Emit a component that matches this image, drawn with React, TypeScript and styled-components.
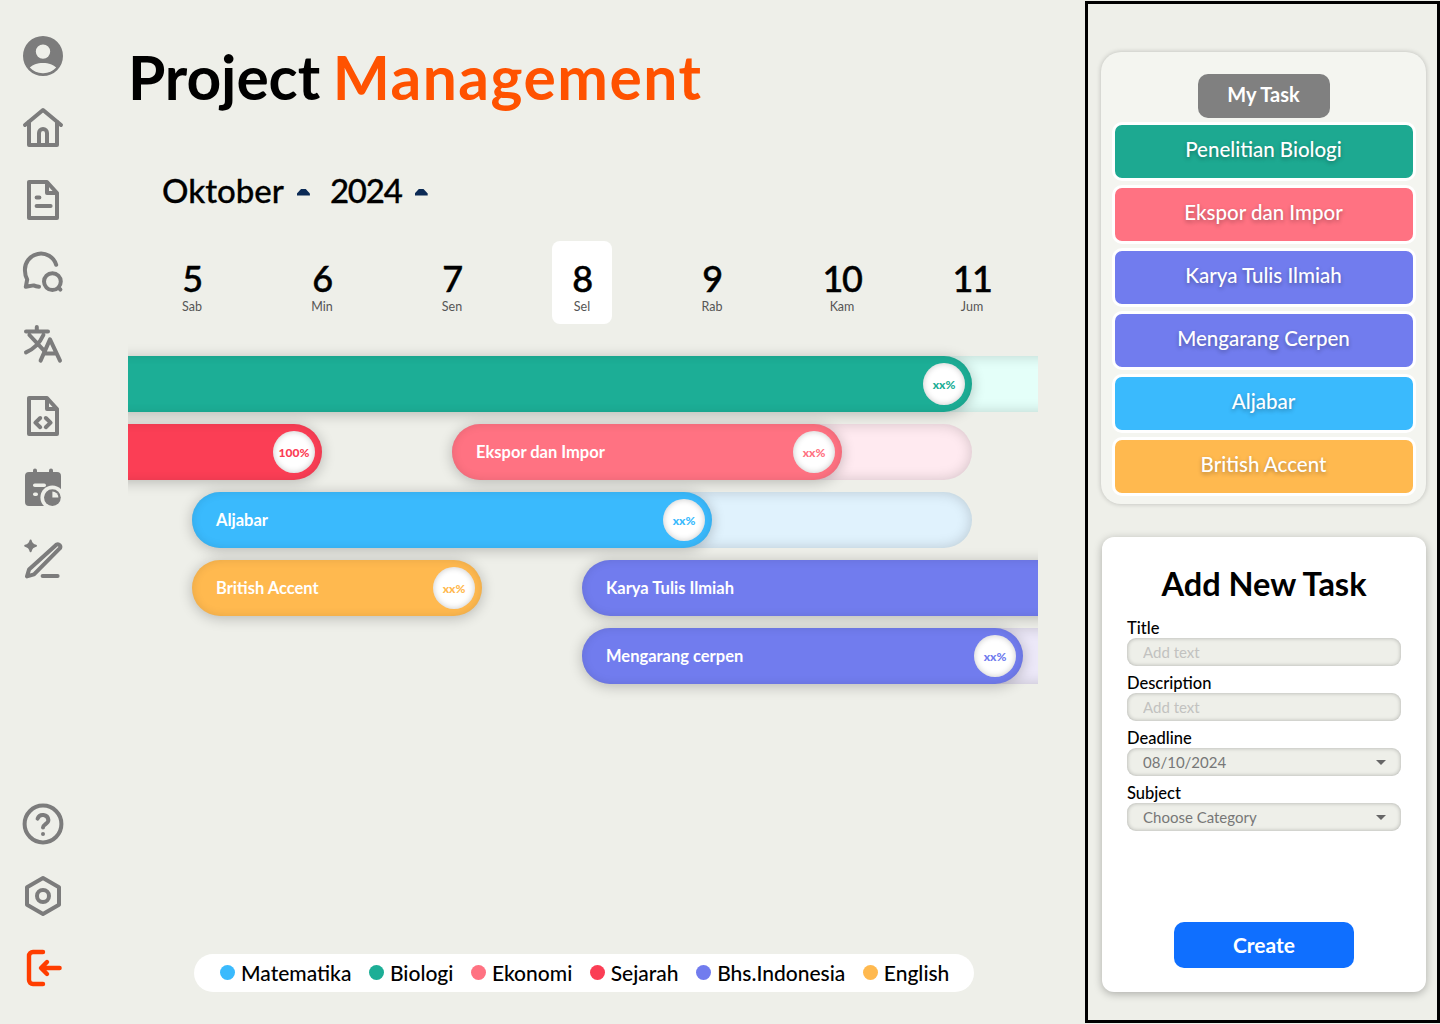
import React from 'react'
import styled, { createGlobalStyle } from 'styled-components'

const GlobalStyle = createGlobalStyle`
  html, body {
    margin: 0;
    padding: 0;
    background: #eeefe9;
  }
  * {
    box-sizing: border-box;
  }
`

const Page = styled.div`
  display: flex;
  width: 1440px;
  height: 1024px;
  overflow: hidden;
  background: #eeefe9;
  color: #000;
  font-family: Lato, 'Open Sans', sans-serif;
`

const Sidebar = styled.nav`
  flex: 0 0 86px;
  display: flex;
  flex-direction: column;
  justify-content: space-between;
  padding: 32px 0 32px 19px;
`

const IconGroup = styled.div`
  display: flex;
  flex-direction: column;
  gap: 24px;
`

const NavIcon = styled.svg.attrs({ viewBox: '0 0 24 24' })<{ $color?: string }>`
  display: block;
  width: 48px;
  height: 48px;
  fill: none;
  stroke: ${(p) => p.$color || '#7c7c7c'};
  stroke-width: 2;
  stroke-linecap: round;
  stroke-linejoin: round;
`

const Main = styled.main`
  flex: 0 0 999px;
  display: flex;
  flex-direction: column;
  padding-left: 42px;
`

const Title = styled.h1`
  margin: 41px 0 0;
  font-size: 60.5px;
  line-height: 72px;
  font-weight: 700;
  letter-spacing: -0.1px;
  word-spacing: -2px;
  span {
    color: #ff5200;
    letter-spacing: 1.5px;
  }
`

const DatePicker = styled.div`
  display: flex;
  align-items: center;
  margin: 61px 0 0 34px;
  height: 32px;
  font-size: 33px;
  font-weight: 500;
  -webkit-text-stroke: 0.3px #000;
`

const Year = styled.span`
  letter-spacing: -1.2px;
`

const Caret = styled.i<{ $gap: number }>`
  width: 13px;
  height: 7px;
  margin: 4px ${(p) => p.$gap}px 0 13px;
  background: #0b2a55;
  clip-path: polygon(50% 0, 68% 8%, 100% 72%, 100% 100%, 0 100%, 0 72%, 32% 8%);
`

const Days = styled.div`
  display: flex;
  gap: 70px;
  margin: 35px 0 0 34px;
`

const Day = styled.div<{ $active?: boolean }>`
  width: 60px;
  height: 83px;
  padding-top: 17px;
  border-radius: 8px;
  text-align: center;
  background: ${(p) => (p.$active ? '#fff' : 'transparent')};
`

const DayNumber = styled.div`
  font-size: 36px;
  line-height: 40px;
  font-weight: 500;
  letter-spacing: -1.5px;
  -webkit-text-stroke: 0.5px #000;
`

const DayName = styled.div`
  margin-top: 1px;
  font-size: 12.5px;
  line-height: 16px;
  color: #555;
`

const Chart = styled.div`
  width: 910px;
  margin-top: 32px;
  display: flex;
  flex-direction: column;
  gap: 12px;
  overflow-x: clip;
`

const Row = styled.div`
  display: flex;
  height: 56px;
`

const Track = styled.div<{ $offset: number; $width: number; $tint?: string }>`
  flex: 0 0 ${(p) => p.$width}px;
  height: 56px;
  margin-left: ${(p) => p.$offset}px;
  border-radius: 28px;
  background: ${(p) => p.$tint || 'transparent'};
  box-shadow: ${(p) => (p.$tint ? 'inset 0 0 14px rgba(0, 0, 0, 0.18)' : 'none')};
`

const Fill = styled.div<{ $width: number; $color: string }>`
  display: flex;
  align-items: center;
  justify-content: space-between;
  width: ${(p) => p.$width}px;
  height: 56px;
  padding: 0 7px 0 24px;
  border-radius: 28px;
  background: ${(p) => p.$color};
  box-shadow: 0 2px 14px rgba(0, 0, 0, 0.24), inset 0 0 10px rgba(0, 0, 0, 0.1);
  color: #fff;
  font-size: 16.5px;
  font-weight: 700;
`

const Knob = styled.div<{ $color: string }>`
  flex: none;
  display: flex;
  align-items: center;
  justify-content: center;
  width: 42px;
  height: 42px;
  border-radius: 50%;
  background: #fff;
  box-shadow: inset 0 0 6px rgba(0, 0, 0, 0.22);
  color: ${(p) => p.$color};
  font-size: 12px;
  font-weight: 900;
`

const Legend = styled.div`
  display: flex;
  align-items: center;
  gap: 17.5px;
  width: 780px;
  height: 38px;
  margin: auto 0 32px 66px;
  padding: 0 0 2px 26px;
  border-radius: 19px;
  background: #fff;
`

const LegendItem = styled.div`
  display: flex;
  align-items: center;
  gap: 6px;
  font-size: 21px;
  font-weight: 500;
`

const Dot = styled.i<{ $color: string }>`
  width: 15px;
  height: 15px;
  border-radius: 50%;
  background: ${(p) => p.$color};
`

const Aside = styled.aside`
  flex: 0 0 355px;
  display: flex;
  flex-direction: column;
  height: 1022px;
  margin-top: 1px;
  padding: 48px 11px 0 13px;
  border: 3px solid #000;
`

const TaskCard = styled.section`
  display: flex;
  flex-direction: column;
  align-items: center;
  height: 452px;
  padding-top: 22px;
  border-radius: 20px;
  background: #f4f5f0;
  box-shadow: 0 0 5px rgba(0, 0, 0, 0.22);
`

const MyTask = styled.div`
  display: flex;
  align-items: center;
  justify-content: center;
  width: 132px;
  height: 44px;
  margin-bottom: 4px;
  padding-bottom: 4px;
  border-radius: 10px;
  background: #808080;
  color: #fff;
  font-size: 20px;
  font-weight: 700;
`

const TaskList = styled.div`
  display: flex;
  flex-direction: column;
  gap: 4px;
`

const TaskItem = styled.div<{ $color: string }>`
  display: flex;
  align-items: center;
  justify-content: center;
  width: 304px;
  height: 59px;
  padding-bottom: 6px;
  border: 3px solid #fff;
  border-radius: 10px;
  background: ${(p) => p.$color};
  color: #fff;
  font-size: 20.5px;
  font-weight: 500;
  text-shadow: 0 2px 4px rgba(0, 0, 0, 0.3);
`

const FormCard = styled.form`
  display: flex;
  flex-direction: column;
  height: 455px;
  margin: 33px 0 0 1px;
  padding: 27px 25px 24px;
  border-radius: 12px;
  background: #fff;
  box-shadow: 0 2px 8px rgba(0, 0, 0, 0.28);
`

const FormTitle = styled.h2`
  margin: 0 0 14px;
  font-size: 32.5px;
  line-height: 40px;
  font-weight: 700;
  text-align: center;
`

const Label = styled.label`
  display: block;
  height: 20px;
  margin-top: 7px;
  font-size: 16.5px;
  line-height: 20px;
  font-weight: 500;
  &:first-of-type {
    margin-top: 0;
  }
`

const Input = styled.input`
  display: block;
  width: 274px;
  height: 28px;
  padding: 0 16px;
  border: none;
  outline: none;
  border-radius: 9px;
  background: #eeefe9;
  box-shadow: inset 0 0 4px rgba(0, 0, 0, 0.28);
  font-family: inherit;
  font-size: 15px;
  &::placeholder {
    color: #c2c2c0;
    opacity: 1;
  }
`

const Select = styled.div`
  display: flex;
  align-items: center;
  justify-content: space-between;
  width: 274px;
  height: 28px;
  padding: 0 15px 0 16px;
  border-radius: 9px;
  background: #eeefe9;
  box-shadow: inset 0 0 4px rgba(0, 0, 0, 0.28);
  color: #777;
  font-size: 15px;
  &::after {
    content: '';
    border-top: 5px solid #666;
    border-left: 5px solid transparent;
    border-right: 5px solid transparent;
  }
`

const CreateButton = styled.button`
  align-self: center;
  width: 180px;
  height: 46px;
  margin-top: auto;
  padding-bottom: 3px;
  border: none;
  border-radius: 10px;
  background: #0f6fff;
  color: #fff;
  font-family: inherit;
  font-size: 21px;
  font-weight: 700;
`

const TEAL = '#1cae96'
const PINK = '#ff7282'
const RED = '#fb3e55'
const BLUE = '#3abafd'
const PURPLE = '#717cee'
const ORANGE = '#ffb94f'

const days = [
  ['5', 'Sab'],
  ['6', 'Min'],
  ['7', 'Sen'],
  ['8', 'Sel'],
  ['9', 'Rab'],
  ['10', 'Kam'],
  ['11', 'Jum']
]

const legend = [
  ['Matematika', BLUE],
  ['Biologi', TEAL],
  ['Ekonomi', PINK],
  ['Sejarah', RED],
  ['Bhs.Indonesia', PURPLE],
  ['English', ORANGE]
]

const tasks = [
  ['Penelitian Biologi', '#1da991'],
  ['Ekspor dan Impor', PINK],
  ['Karya Tulis Ilmiah', PURPLE],
  ['Mengarang Cerpen', PURPLE],
  ['Aljabar', BLUE],
  ['British Accent', ORANGE]
]

const BG = '#eeefe9'

const topIcons = [
  <NavIcon key='user' style={{ stroke: 'none' }}>
    <path
      fill='#7c7c7c'
      fillRule='evenodd'
      d='M12 2a10 10 0 1 0 0 20 10 10 0 0 0 0-20Zm0 4.2a3.6 3.6 0 1 1 0 7.2 3.6 3.6 0 0 1 0-7.2Zm0 9.3c2.9 0 5.4 1 6.6 2.3A8.8 8.8 0 0 1 12 20.6a8.8 8.8 0 0 1-6.6-2.8c1.2-1.3 3.7-2.3 6.6-2.3Z'
    />
  </NavIcon>,
  <NavIcon key='home'>
    <path d='M3 10.500 12 3l9 7.500' />
    <path d='M5 9v11.500h14V9' />
    <path d='M10 20.500v-6a2 2 0 0 1 4 0v6' />
  </NavIcon>,
  <NavIcon key='doc'>
    <path d='M5 3h9l5 5.500V21H5Z' />
    <path d='M14 3.500v5h4.500' />
    <path d='M8.800 10.800h1.400M8.800 15h7' />
  </NavIcon>,
  <NavIcon key='chat'>
    <path d='M18.600 8.400A8 8 0 0 0 3 11.500c0 1.600.4 3 1.100 4.200L3.400 19.400l3.900-.7c.9.4 1.800.6 2.700.7' />
    <circle cx='16.700' cy='16.800' r='4.200' />
    <path d='m20 20 .7 .8' />
  </NavIcon>,
  <NavIcon key='translate'>
    <path d='M3.500 5.800h11M8.900 3.500v2.300M5.200 7.500 13 15.800M12.200 7.500c-1.800 4-4.800 7-8.700 8.700' />
    <path d='m10.800 20.300 4.700-10.600 5 10.600M12.400 16.700h6.400' />
  </NavIcon>,
  <NavIcon key='code'>
    <path d='M5 3h9l5 5.500V21H5Z' />
    <path d='M14 3.500v5h4.500' />
    <path d='m10.600 13-2.400 2.300 2.400 2.300M13.400 13l2.400 2.300-2.400 2.300' />
  </NavIcon>,
  <NavIcon key='calendar' style={{ strokeWidth: 0 }}>
    <path
      fill='#7c7c7c'
      d='M7 3.200a1 1 0 0 1 2 0V4h6v-.8a1 1 0 0 1 2 0V4h2a2 2 0 0 1 2 2v13a2 2 0 0 1-2 2H5a2 2 0 0 1-2-2V6a2 2 0 0 1 2-2h2Z'
    />
    <circle cx='16.700' cy='16.800' r='6' fill={BG} />
    <circle cx='16.700' cy='16.800' r='4.200' fill='#7c7c7c' />
    <path fill={BG} d='M16.700 13.800v3h3a3 3 0 0 0-3-3Z' />
    <rect x='7' y='9.700' width='6.500' height='1.800' rx='.9' fill={BG} />
    <rect x='7' y='14.200' width='2.500' height='1.800' rx='.9' fill={BG} />
  </NavIcon>,
  <NavIcon key='pen'>
    <path
      fill='#7c7c7c'
      stroke='#7c7c7c'
      strokeWidth='1'
      d='M5.800 2.200c.4 1.700 1 2.300 2.700 2.700-1.700.4-2.300 1-2.700 2.700-.4-1.700-1-2.300-2.700-2.700 1.700-.4 2.300-1 2.700-2.700Z'
    />
    <path d='M18.800 4.300a1.300 1.300 0 0 1 1.700 1.800L7.500 19.200l-3.500 1 1-3.400Z' />
    <path d='M11.800 20h7.500' />
  </NavIcon>
]

const bottomIcons = [
  <NavIcon key='help'>
    <circle cx='12' cy='12' r='9.200' />
    <path d='M9.300 9.300a2.800 2.800 0 0 1 5.400.7c0 1.900-2.700 2.200-2.700 3.800' />
    <path d='M12 17h.01' />
  </NavIcon>,
  <NavIcon key='settings'>
    <path d='m12 3 8 4.600v8.800L12 21l-8-4.600V7.600Z' />
    <circle cx='12' cy='12' r='3' />
  </NavIcon>,
  <NavIcon key='logout' $color='#ff3d00'>
    <path d='M12 4H7a2 2 0 0 0-2 2v12a2 2 0 0 0 2 2h5' strokeWidth='2.200' />
    <path d='M20.300 12H11.500M14 9l-3 3 3 3' strokeWidth='2.200' />
  </NavIcon>
]

const App = () => {
  return (
    <Page>
      <GlobalStyle />
      <Sidebar>
        <IconGroup>{topIcons}</IconGroup>
        <IconGroup>{bottomIcons}</IconGroup>
      </Sidebar>
      <Main>
        <Title>
          Project <span>Management</span>
        </Title>
        <DatePicker>
          Oktober
          <Caret $gap={20} />
          <Year>2024</Year>
          <Caret $gap={0} />
        </DatePicker>
        <Days>
          {days.map(([num, name]) => (
            <Day key={num} $active={num === '8'}>
              <DayNumber>{num}</DayNumber>
              <DayName>{name}</DayName>
            </Day>
          ))}
        </Days>
        <Chart>
          <Row>
            <Track $offset={-40} $width={1000} $tint='#e4fff9'>
              <Fill $width={884} $color={TEAL}>
                <span />
                <Knob $color={TEAL}>xx%</Knob>
              </Fill>
            </Track>
          </Row>
          <Row>
            <Track $offset={-40} $width={234}>
              <Fill $width={234} $color={RED}>
                <span />
                <Knob $color={RED}>100%</Knob>
              </Fill>
            </Track>
            <Track $offset={130} $width={520} $tint='#ffeaf0'>
              <Fill $width={390} $color={PINK}>
                Ekspor dan Impor
                <Knob $color={PINK}>xx%</Knob>
              </Fill>
            </Track>
          </Row>
          <Row>
            <Track $offset={64} $width={780} $tint='#e0f2fd'>
              <Fill $width={520} $color={BLUE}>
                Aljabar
                <Knob $color={BLUE}>xx%</Knob>
              </Fill>
            </Track>
          </Row>
          <Row>
            <Track $offset={64} $width={290}>
              <Fill $width={290} $color={ORANGE}>
                British Accent
                <Knob $color={ORANGE}>xx%</Knob>
              </Fill>
            </Track>
            <Track $offset={100} $width={560}>
              <Fill $width={560} $color={PURPLE}>
                Karya Tulis Ilmiah
              </Fill>
            </Track>
          </Row>
          <Row>
            <Track $offset={454} $width={560} $tint='#ece8f8'>
              <Fill $width={441} $color={PURPLE}>
                Mengarang cerpen
                <Knob $color={PURPLE}>xx%</Knob>
              </Fill>
            </Track>
          </Row>
        </Chart>
        <Legend>
          {legend.map(([name, color]) => (
            <LegendItem key={name}>
              <Dot $color={color} />
              {name}
            </LegendItem>
          ))}
        </Legend>
      </Main>
      <Aside>
        <TaskCard>
          <MyTask>My Task</MyTask>
          <TaskList>
            {tasks.map(([name, color]) => (
              <TaskItem key={name} $color={color}>
                {name}
              </TaskItem>
            ))}
          </TaskList>
        </TaskCard>
        <FormCard>
          <FormTitle>Add New Task</FormTitle>
          <Label>Title</Label>
          <Input placeholder='Add text' />
          <Label>Description</Label>
          <Input placeholder='Add text' />
          <Label>Deadline</Label>
          <Select>08/10/2024</Select>
          <Label>Subject</Label>
          <Select>Choose Category</Select>
          <CreateButton type='button'>Create</CreateButton>
        </FormCard>
      </Aside>
    </Page>
  )
}

export default App
